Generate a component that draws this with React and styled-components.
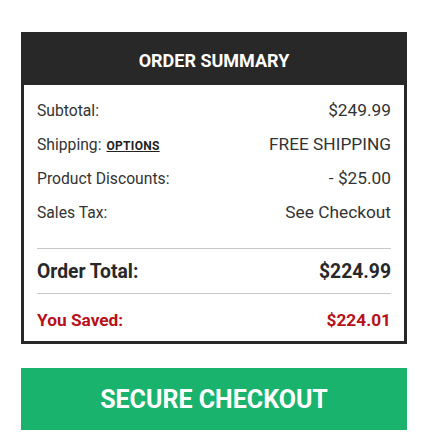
import React from 'react';
import styled, { createGlobalStyle } from 'styled-components';

const GlobalStyle = createGlobalStyle`
  body {
    margin: 0;
    background: #fff;
    font-family: Roboto, "Liberation Sans", Arial, sans-serif;
  }
`;

const Page = styled.div`
  width: 386px;
  padding: 32px 0 0 21px;
`;

const Summary = styled.div`
  border: 3px solid #282828;
  background: #fff;
`;

const Header = styled.div`
  height: 50px;
  margin: 0 -1px;
  background: #282828;
  color: #fff;
  display: flex;
  align-items: center;
  justify-content: center;
  font-weight: 700;
  font-size: 18px;
  text-transform: uppercase;
`;

const Body = styled.div`
  padding: 8px 13px 0;
`;

const Row = styled.div`
  display: flex;
  justify-content: space-between;
  align-items: center;
  height: 34px;
  color: #333;
`;

const Label = styled.span`
  font-size: 15.7px;
`;

const Value = styled.span`
  font-size: 17.3px;
`;

const OptionsLink = styled.a`
  font-size: 12px;
  font-weight: 700;
  letter-spacing: 0.3px;
  color: #222;
  text-decoration: underline;
  margin-left: 5px;
  cursor: pointer;
`;

const Totals = styled.div`
  margin-top: 19px;
  border-top: 1px solid #c8c8c8;
`;

const TotalRow = styled.div`
  display: flex;
  justify-content: space-between;
  align-items: center;
  height: 44px;
  border-bottom: 1px solid #c8c8c8;
  color: #282828;
  font-weight: 700;
  font-size: 19.3px;
`;

const SavedRow = styled.div`
  display: flex;
  justify-content: space-between;
  align-items: center;
  padding: 16px 0 11px;
  line-height: 20px;
  color: #b8111a;
  font-weight: 700;
  font-size: 17.3px;
`;

const CheckoutButton = styled.button`
  display: block;
  width: 100%;
  height: 62px;
  margin-top: 24px;
  border: none;
  background: #1ab36e;
  color: #fff;
  font-family: Roboto, "Liberation Sans", Arial, sans-serif;
  font-weight: 700;
  font-size: 25px;
  text-transform: uppercase;
  cursor: pointer;
`;

const lines = [
  { label: 'Subtotal:', value: '$249.99' },
  { label: 'Shipping:', value: 'FREE SHIPPING', link: 'Options' },
  { label: 'Product Discounts:', value: '- $25.00' },
  { label: 'Sales Tax:', value: 'See Checkout' },
];

const App = () => (
  <Page>
    <GlobalStyle />
    <Summary>
      <Header>Order Summary</Header>
      <Body>
        {lines.map(line => (
          <Row key={line.label}>
            <Label>
              {line.label}
              {line.link && <OptionsLink>{line.link.toUpperCase()}</OptionsLink>}
            </Label>
            <Value>{line.value}</Value>
          </Row>
        ))}
        <Totals>
          <TotalRow>
            <span>Order Total:</span>
            <span>$224.99</span>
          </TotalRow>
          <SavedRow>
            <span>You Saved:</span>
            <span>$224.01</span>
          </SavedRow>
        </Totals>
      </Body>
    </Summary>
    <CheckoutButton>Secure Checkout</CheckoutButton>
  </Page>
);

export default App;
